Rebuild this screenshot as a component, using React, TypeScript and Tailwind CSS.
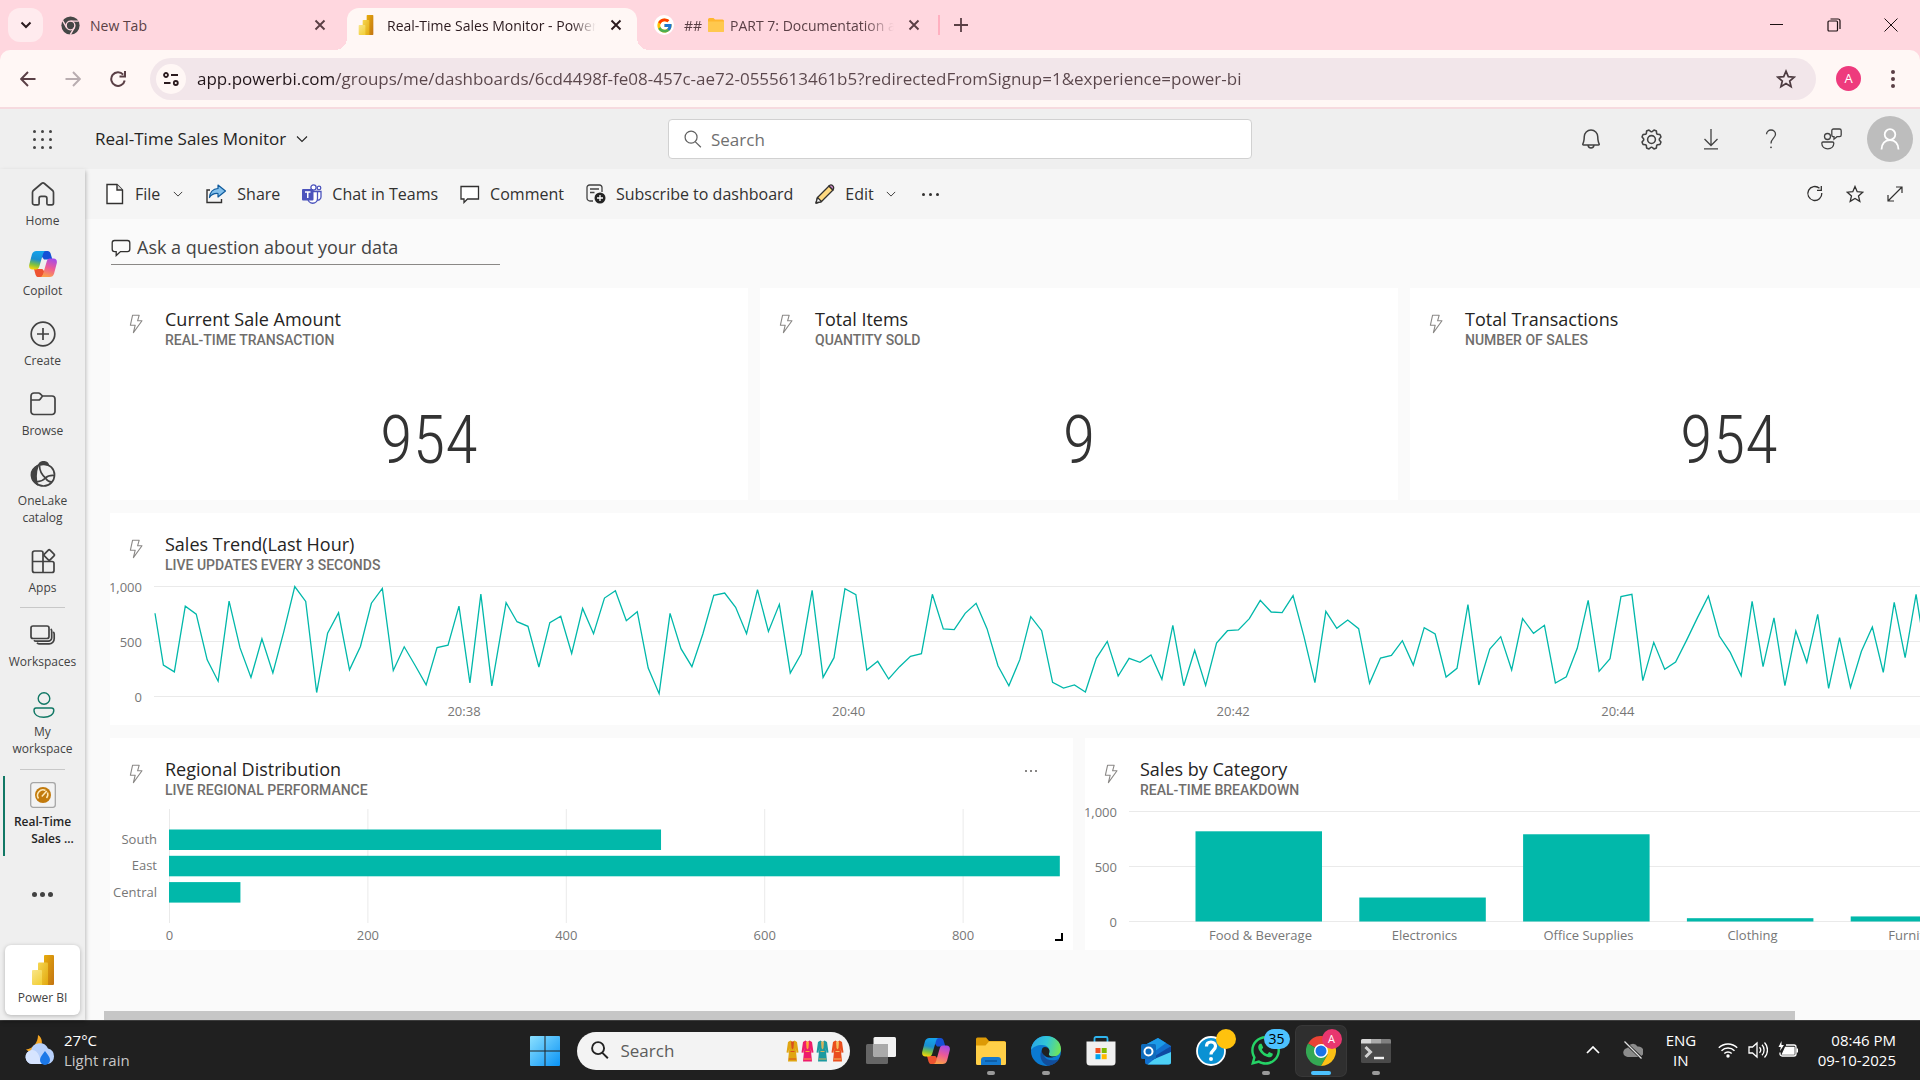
import React, { useState } from "react";
import { FcGoogle } from "react-icons/fc";
import { FaWhatsapp } from "react-icons/fa";
import { PiGear, PiBell } from "react-icons/pi";

type IconProps = { className?: string };

/* ---------- shared line icons ---------- */

const Chevron = ({ className = "" }: IconProps) => (
  <svg viewBox="0 0 12 12" className={className} fill="none" stroke="currentColor" strokeWidth="1.1">
    <path d="M1 3.5l5 5 5-5" />
  </svg>
);

const Cross = ({ className = "" }: IconProps) => (
  <svg viewBox="0 0 12 12" className={className} fill="none" stroke="currentColor" strokeWidth="1.9">
    <path d="M1.5 1.5l9 9M10.5 1.5l-9 9" />
  </svg>
);

const Magnifier = ({ className = "" }: IconProps) => (
  <svg viewBox="0 0 20 20" className={className} fill="none" stroke="currentColor">
    <circle cx="8.5" cy="7.5" r="6.3" />
    <path d="M12.8 12.2l6 6" />
  </svg>
);

const Bolt = () => (
  <svg viewBox="0 0 14 20" className="h-5 w-3.5 shrink-0" fill="none" stroke="#8a8886" strokeWidth="1.1">
    <path d="M3.6 1.2h6.6L8.6 6.8h4.4L4.4 18.6l1.8-7.4H1.4z" strokeLinejoin="round" />
  </svg>
);

const PowerBi = ({ className = "" }: IconProps) => (
  <svg viewBox="0 0 22 30" className={className}>
    <defs>
      <linearGradient id="pb1" x1="0" y1="0" x2="1" y2="1">
        <stop stopColor="#e8ad0c" />
        <stop offset="1" stopColor="#c27312" />
      </linearGradient>
      <linearGradient id="pb2" x1="0" y1="0" x2="1" y2="1">
        <stop stopColor="#f6d751" />
        <stop offset="1" stopColor="#e2a80e" />
      </linearGradient>
      <linearGradient id="pb3" x1="0" y1="0" x2="0.6" y2="1">
        <stop stopColor="#f9e589" />
        <stop offset="1" stopColor="#f3d13f" />
      </linearGradient>
    </defs>
    <rect x="12" width="10" height="30" rx="1" fill="url(#pb1)" />
    <path d="M6 8.5a1 1 0 011-1h8a1 1 0 011 1V30H6z" fill="url(#pb2)" />
    <path d="M0 16a1 1 0 011-1h8a1 1 0 011 1v14H1a1 1 0 01-1-1z" fill="url(#pb3)" />
  </svg>
);

const Copilot = ({ className = "" }: IconProps) => (
  <svg viewBox="0 0 28 26" className={className}>
    <defs>
      <linearGradient id="cp1" x1="0.5" y1="0" x2="0.3" y2="1">
        <stop stopColor="#15a3ec" />
        <stop offset="0.45" stopColor="#1b8fd0" />
        <stop offset="0.75" stopColor="#7dc142" />
        <stop offset="1" stopColor="#f7d50a" />
      </linearGradient>
      <linearGradient id="cp2" x1="0.7" y1="0" x2="0.4" y2="1">
        <stop stopColor="#a54be8" />
        <stop offset="0.5" stopColor="#ee5a96" />
        <stop offset="1" stopColor="#fba048" />
      </linearGradient>
    </defs>
    <path d="M15 0h3.6c1.6 0 2.5 1 3 2.6l1.8 5.8H15l-3-4z" fill="#1550d6" />
    <path d="M13 26H9.6c-1.8 0-2.6-1-3.1-2.6L5 18h8.4l2.4 3z" fill="#ee5330" />
    <path d="M7.4 0H17c-1.7 0-2.4 1.2-2.9 2.8l-3.8 12.6C9.7 17.4 8.9 18.4 7 18.4H3.4C.7 18.4-.4 16.2.3 13.4L2.9 3.6C3.5 1.3 5.2 0 7.4 0z" fill="url(#cp1)" />
    <path d="M20.6 26H11c1.7 0 2.5-1.2 3-2.8l3.7-12.6c.6-2 1.4-3 3.3-3h3.6c2.7 0 3.8 2.2 3.1 5l-2.6 9.8c-.6 2.3-2.3 3.6-4.5 3.6z" fill="url(#cp2)" />
  </svg>
);

const ChromeMono = () => (
  <svg viewBox="0 0 20 20" className="size-[19px]">
    <circle cx="10" cy="10" r="9.6" fill="#454746" />
    <g stroke="#ffd7df" strokeWidth="1.5" fill="none">
      <circle cx="10" cy="10" r="4.6" />
      <path d="M10 5.4h8.6M6 12.3L1.7 4.9M14 12.3l-4.3 7.4" />
    </g>
  </svg>
);

const ChromeColor = () => (
  <svg viewBox="0 0 30 30" className="size-[30px]">
    <path d="M15 15L2 7.5A15 15 0 0128 7.5z" fill="#ea4335" />
    <path d="M15 15L2 7.5A15 15 0 0015 30l6.5-11.2z" fill="#34a853" />
    <path d="M15 8h13.3A15 15 0 0115 30l6.5-11.2z" fill="#fbc116" />
    <circle cx="15" cy="15" r="7" fill="#fff" />
    <circle cx="15" cy="15" r="5.5" fill="#1a73e8" />
  </svg>
);

/* ---------- browser chrome ---------- */

function BrowserTabs() {
  return (
    <div className="flex h-[50px] items-stretch bg-[#ffd7df] pl-2 text-[#5a3f45]">
      <div className="flex items-center">
        <button aria-label="Search tabs" className="flex h-[34px] w-[35px] items-center justify-center rounded-xl bg-[#ffebee] text-[#2b1a1e]">
          <svg viewBox="0 0 12 8" className="h-2 w-3" fill="none" stroke="currentColor" strokeWidth="2">
            <path d="M1.5 1.5L6 6l4.5-4.5" />
          </svg>
        </button>
      </div>
      <div className="flex w-[304px] items-center pr-[21px] pl-[18px]">
        <ChromeMono />
        <span className="ml-[10px] flex-1 text-[14px]">New Tab</span>
        <button aria-label="Close New Tab"><Cross className="size-3" /></button>
      </div>
      <div className="relative mt-2 flex w-[290px] items-center rounded-t-[12px] bg-[#fff7f5] pr-[15px] pb-2 pl-2.5 text-[#2b1a1e]">
        <span className="absolute bottom-0 -left-3 size-3 bg-[radial-gradient(circle_at_0_0,#ffd7df_12px,#fff7f5_12px)]" />
        <span className="absolute -right-3 bottom-0 size-3 bg-[radial-gradient(circle_at_100%_0,#ffd7df_12px,#fff7f5_12px)]" />
        <PowerBi className="h-5 w-[18px]" />
        <span className="mr-3.5 ml-3 flex-1 overflow-hidden text-[14px] whitespace-nowrap [mask-image:linear-gradient(90deg,#000_88%,transparent)]">
          Real-Time Sales Monitor - Power BI
        </span>
        <button aria-label="Close Real-Time Sales Monitor"><Cross className="size-3" /></button>
      </div>
      <div className="flex w-[301px] items-center pr-[18px] pl-[17px]">
        <span className="flex size-5 items-center justify-center rounded-full bg-white"><FcGoogle size={17} /></span>
        <span className="ml-[10px] flex flex-1 items-center gap-[6px] overflow-hidden text-[14px] whitespace-nowrap [mask-image:linear-gradient(90deg,#000_86%,transparent)]">
          ##
          <svg viewBox="0 0 16 14" className="h-3.5 w-4 shrink-0">
            <path d="M0 1.5A1.5 1.5 0 011.5 0h4L7 1.5h7.500A1.5 1.5 0 0116 3v9.500a1.5 1.5 0 01-1.500 1.500h-13A1.5 1.5 0 010 12.500z" fill="#ffb62e" />
            <path d="M0 3.5h16v9a1.500 1.500 0 01-1.500 1.500h-13A1.500 1.500 0 010 12.500z" fill="#ffc84e" />
          </svg>
          PART 7: Documentation and
        </span>
        <button aria-label="Close Documentation" className="ml-3.5"><Cross className="size-3" /></button>
      </div>
      <div className="flex flex-1 items-center">
        <span className="h-5 w-0.5 bg-[#ffb0c0]" />
        <button aria-label="New tab" className="ml-3.5">
          <svg viewBox="0 0 14 14" className="size-3.5" stroke="currentColor" strokeWidth="1.8"><path d="M7 0v14M0 7h14" /></svg>
        </button>
      </div>
      <div className="flex items-center text-[#1c1012]">
        <button aria-label="Minimize" className="flex h-full w-[57px] items-center justify-center">
          <svg viewBox="0 0 13 13" className="size-[13px]" stroke="currentColor"><path d="M0 5.5h13" /></svg>
        </button>
        <button aria-label="Restore" className="flex h-full w-[57px] items-center justify-center">
          <svg viewBox="0 0 14 14" className="size-3.5" fill="none" stroke="currentColor" strokeWidth="1.2">
            <rect x="1" y="3" width="9.5" height="10" rx="1" /><path d="M3.5 1h7.500a2 2 0 012 2v8" />
          </svg>
        </button>
        <button aria-label="Close window" className="flex h-full w-[58px] items-center justify-center">
          <svg viewBox="0 0 14 14" className="size-3.5" stroke="currentColor" strokeWidth="1"><path d="M.5.5l13 13M13.500.5l-13 13" /></svg>
        </button>
      </div>
    </div>
  );
}

function AddressBar() {
  const [url, setUrl] = useState(
    "app.powerbi.com/groups/me/dashboards/6cd4498f-fe08-457c-ae72-0555613461b5?redirectedFromSignup=1&experience=power-bi",
  );
  return (
    <div className="bg-[#ffd7df]">
      <div className="flex h-[59px] items-center rounded-t-[10px] border-b-2 border-[#f6dadf] bg-[#fff7f5] pl-4 text-[#5a3f45]">
        <button aria-label="Back" className="flex w-[45px] pl-1">
          <svg viewBox="0 0 16 16" className="size-4" fill="none" stroke="currentColor" strokeWidth="1.9"><path d="M15.5 8H1.500M8 1L1.200 8 8 15" /></svg>
        </button>
        <button aria-label="Forward" className="flex w-[45px] pl-1 text-[#b9adb0]">
          <svg viewBox="0 0 16 16" className="size-4" fill="none" stroke="currentColor" strokeWidth="1.9"><path d="M.5 8h14M8 1l6.800 7L8 15" /></svg>
        </button>
        <button aria-label="Reload" className="flex w-11 pl-1">
          <svg viewBox="0 0 16 16" className="size-4" fill="none" stroke="currentColor" strokeWidth="2">
            <path d="M13.2 3.6A6.800 6.800 0 1014.700 9.500" /><path d="M15 0v5.500H9.500" />
          </svg>
        </button>
        <div className="flex h-[42px] flex-1 items-center rounded-full bg-[#f2e6ea] pr-5 pl-[6px]">
          <button aria-label="Site information" className="mr-[11px] flex size-[30px] items-center justify-center rounded-full bg-[#fff7f5] text-[#2b1a1e]">
            <svg viewBox="0 0 16 14" className="h-3.5 w-4" fill="none" stroke="currentColor" strokeWidth="1.8">
              <circle cx="3" cy="3" r="2" /><path d="M8 3h7M1 11h6.500" /><circle cx="12.800" cy="11" r="2" />
            </svg>
          </button>
          <input
            aria-label="Address"
            value={url}
            onChange={(e) => setUrl(e.target.value)}
            className="h-7 flex-1 bg-[linear-gradient(90deg,#22161a_138px,#5a464b_138px)] bg-clip-text text-[17px] text-transparent outline-none"
          />
          <button aria-label="Bookmark this tab">
            <svg viewBox="0 0 20 20" className="size-5" fill="none" stroke="#4d3b40" strokeWidth="1.7">
              <path d="M10 2.2l2.300 5.400 5.900.5-4.500 3.900 1.400 5.700L10 14.600l-5.100 3.100L6.300 12 1.800 8.100l5.900-.5z" />
            </svg>
          </button>
        </div>
        <button aria-label="Profile" className="mr-[26px] ml-5 flex size-[25px] items-center justify-center rounded-full bg-[#ee3a7d] text-[13px] text-white">A</button>
        <button aria-label="Browser menu" className="mr-[25px] ml-1 flex flex-col gap-[3px]">
          {[0, 1, 2].map((i) => <span key={i} className="size-1 rounded-full bg-current" />)}
        </button>
      </div>
    </div>
  );
}

/* ---------- Power BI header ---------- */

function AppHeader() {
  return (
    <header className="grid h-[60px] grid-cols-[1fr_584px_1fr] items-center bg-[#efefef] text-[#333]">
      <div className="flex items-center pl-[33px]">
        <button aria-label="App launcher" className="grid grid-cols-3 gap-[5px]">
          {Array.from({ length: 9 }, (_, i) => <span key={i} className="size-[3px] rounded-full bg-[#444]" />)}
        </button>
        <button className="ml-[43px] flex items-center gap-[10px] text-[17px] text-[#252423]">
          Real-Time Sales Monitor <Chevron className="size-3" />
        </button>
      </div>
      <div className="flex h-10 items-center gap-[9px] rounded border border-[#d1d1d1] bg-white px-3.5 text-[#616161]">
        <Magnifier className="size-[19px] shrink-0 stroke-[1.3px]" />
        <input aria-label="Search" placeholder="Search" className="w-full bg-transparent pt-px text-[17px] outline-none placeholder:text-[#707070]" />
      </div>
      <div className="flex items-center justify-end pr-[7px] text-[#424242]">
        <button aria-label="Notifications" className="flex w-[60px] justify-center"><PiBell size={24} /></button>
        <button aria-label="Settings" className="flex w-[60px] justify-center"><PiGear size={25} /></button>
        <button aria-label="Download" className="flex w-[60px] justify-center">
          <svg viewBox="0 0 22 22" className="size-[22px]" fill="none" stroke="currentColor" strokeWidth="1.3"><path d="M11 1v16M4.500 11L11 17.500l6.500-6.500M4 20.800h14" /></svg>
        </button>
        <button aria-label="Help" className="flex w-[60px] justify-center">
          <svg viewBox="0 0 22 22" className="size-[22px]" fill="none" stroke="currentColor" strokeWidth="1.3">
            <path d="M6.500 6.200A4.500 4.500 0 0111 2c2.600 0 4.500 1.800 4.500 4.200 0 3.800-4.500 4.300-4.500 9.300" /><circle cx="11" cy="19.300" r=".9" fill="currentColor" stroke="none" />
          </svg>
        </button>
        <button aria-label="Feedback" className="flex w-[60px] justify-center">
          <svg viewBox="0 0 22 22" className="size-[22px]" fill="none" stroke="currentColor" strokeWidth="1.3">
            <circle cx="7.500" cy="8.500" r="3" /><path d="M3 14h9.500c.8 0 1.300.6 1.300 1.300 0 3.200-2.600 5.500-6 5.500s-6-2.300-6-5.500c0-.7.5-1.300 1.200-1.300z" />
            <path d="M13.500 1h6a1.700 1.700 0 011.700 1.700V7a1.700 1.700 0 01-1.700 1.700H17l-3 2.500V8.700h-.5A1.700 1.700 0 0111.800 7V2.700A1.700 1.700 0 0113.500 1z" />
          </svg>
        </button>
        <button aria-label="Account" className="ml-[6px] flex size-[46px] items-center justify-center rounded-full bg-[#bdbdbd]">
          <svg viewBox="0 0 22 22" className="size-[22px]" fill="none" stroke="#fff" strokeWidth="1.8"><circle cx="11" cy="6.500" r="5.300" /><path d="M2.500 21.500c0-5.500 3.500-9.500 8.500-9.500s8.500 4 8.500 9.500" /></svg>
        </button>
      </div>
    </header>
  );
}

/* ---------- left navigation ---------- */

const navIcon = "h-[26px] w-[26px]";
const lineProps = { fill: "none", stroke: "#424242", strokeWidth: 1.7 } as const;

function NavItem({ icon, children, bold }: { icon: React.ReactNode; children: React.ReactNode; bold?: boolean }) {
  return (
    <a href="#" className={"flex flex-col items-center gap-[5px] pt-[6px] text-center text-[12px] leading-[17px] " + (bold ? "font-semibold text-[#242424]" : "text-[#424242]")}>
      {icon}
      <span>{children}</span>
    </a>
  );
}

function SideNav() {
  return (
    <nav className="relative z-10 flex w-[85px] shrink-0 flex-col bg-[#efefef] pt-[6px] shadow-[1px_2px_4px_rgba(0,0,0,0.25)]">
      <div className="flex flex-col gap-4">
        <NavItem icon={<svg viewBox="0 0 26 26" className={navIcon} {...lineProps}><path d="M2.500 11.500c0-.8.3-1.500.9-2l8.200-7a2.200 2.200 0 012.800 0l8.200 7c.6.500.9 1.200.9 2V22c0 1-.7 1.800-1.700 1.800h-3.500c-.8 0-1.400-.6-1.400-1.400v-5a2 2 0 00-2-2h-3.800a2 2 0 00-2 2v5c0 .8-.6 1.400-1.400 1.400H4.200c-1 0-1.700-.8-1.700-1.800z" /></svg>}>Home</NavItem>
        <NavItem icon={<Copilot className="h-[26px] w-7" />}>Copilot</NavItem>
        <NavItem icon={<svg viewBox="0 0 26 26" className={navIcon} {...lineProps}><circle cx="13" cy="13" r="11.800" /><path d="M13 7v12M7 13h12" /></svg>}>Create</NavItem>
        <NavItem icon={<svg viewBox="0 0 26 26" className={navIcon} {...lineProps}><path d="M1 9V5a3 3 0 013-3h4.500c.6 0 1.100.2 1.500.6L12.500 5H22a3 3 0 013 3v12.500a3 3 0 01-3 3H4a3 3 0 01-3-3V9h7.500c.6 0 1.100-.2 1.500-.6L12.500 5" /></svg>}>Browse</NavItem>
        <NavItem icon={<svg viewBox="0 0 26 26" className={navIcon} fill="none" stroke="#424242" strokeWidth="1.7"><path d="M9 4C9.500 1.800 11 .8 13.500.8c2.600 0 4.500 1.500 4.800 3.400-3-1.200-6-1.200-9.300-.2z" fill="#424242" /><path d="M8 4.500C3 7 1 10.500 1.500 15c.4 4 2.500 6.500 5.500 8.200C5.500 17 5.500 11 8 4.500z" fill="#424242" /><circle cx="13.500" cy="14" r="11" /><path d="M9.500 4.500c0 5 1.500 8.500 6 12.500M6.500 20.500c4 .5 6.500-1 9-3.500 2-2 4.500-3 9-2.500M15.500 17c1.500 2.500 4 4 6.500 4" /></svg>}>OneLake<br />catalog</NavItem>
        <NavItem icon={<svg viewBox="0 0 26 26" className={navIcon} {...lineProps}><path d="M13 13.500V5a2 2 0 00-2-2H4.500a2 2 0 00-2 2v17.500a2 2 0 002 2H22a2 2 0 002-2v-7a2 2 0 00-2-2H2.500M13 13.500v11" /><rect x="15.200" y="3" width="8" height="8" rx="1.200" transform="rotate(45 19.200 7)" /></svg>}>Apps</NavItem>
      </div>
      <hr className="mx-5 mt-[11px] mb-2 border-[#c8c8c8]" />
      <div className="flex flex-col gap-4">
        <NavItem icon={<svg viewBox="0 0 26 26" className={navIcon} {...lineProps}><rect x="1" y="4" width="18" height="12.500" rx="2" /><path d="M4 18.200c.5.700 1.200 1 2 1h12.200a3.500 3.500 0 003.500-3.500V9c0-.8-.3-1.500-1-2M7 20.800c.5.700 1.200 1 2 1h10.200a5 5 0 005-5V12c0-.8-.3-1.500-1-2" /></svg>}>Workspaces</NavItem>
        <NavItem icon={<svg viewBox="0 0 26 26" className={navIcon} fill="none" stroke="#117865" strokeWidth="1.4"><circle cx="14" cy="6.500" r="5.800" /><path d="M6 16h15.500c1.400 0 2.300 1 2.300 2.200 0 4.400-4.300 7-10 7S4 22.600 4 18.200C4 17 4.700 16 6 16z" /></svg>}>My<br />workspace</NavItem>
      </div>
      <hr className="mx-5 mt-3 mb-[6px] border-[#c8c8c8]" />
      <div className="ml-[3px] h-20 border-l-2 border-[#117865] pr-[5px]">
        <NavItem bold icon={
          <svg viewBox="0 0 26 26" className={navIcon}>
            <rect x=".7" y=".7" width="24.600" height="24.600" rx="2.500" fill="#f3f3f3" stroke="#a6a6a6" strokeWidth="1.3" />
            <circle cx="13" cy="13" r="8" fill="#c27a0c" />
            <path d="M8.500 16.500a5.500 5.500 0 017-8M17.500 10.500a5.500 5.500 0 01-1 5.500M11.800 14.500l5-5.500" fill="none" stroke="#ffe9b8" strokeWidth="1.5" />
          </svg>}>Real-Time<br /><span className="ml-5">Sales ...</span></NavItem>
      </div>
      <button aria-label="More" className="mt-9 flex justify-center gap-[3px]">
        {[0, 1, 2].map((i) => <span key={i} className="size-[5px] rounded-full bg-[#424242]" />)}
      </button>
      <a href="#" className="mx-[5px] mt-auto mb-[5px] flex h-[70px] flex-col items-center gap-1 rounded-md bg-white pt-[10px] text-[12px] leading-[17px] text-[#424242] shadow-[0_1px_4px_rgba(0,0,0,0.25)]">
        <PowerBi className="h-[30px] w-[22px]" />
        Power BI
      </a>
    </nav>
  );
}

/* ---------- dashboard toolbar ---------- */

function Toolbar() {
  const item = "flex items-center gap-[10px] whitespace-nowrap";
  return (
    <div className="flex h-[50px] items-center bg-[#f5f5f5] pr-4 pl-[21px] text-[16px] text-[#323130]">
      <div className="flex flex-1 items-center gap-[22px]">
        <button className={item}>
          <svg viewBox="0 0 18 22" className="mr-px h-[22px] w-[18px]" stroke="#323130" strokeWidth="1.4"><path d="M1 1.500h10L16.500 7v13.500H1z" fill="#fff" /><path d="M11 1.500V7h5.500" fill="#ddd" /></svg>
          File <Chevron className="ml-[3px] size-2.5" />
        </button>
        <button className={item}>
          <svg viewBox="0 0 22 22" className="size-[22px]"><path d="M5 7H2v12.500h14.500V16" fill="none" stroke="#323130" strokeWidth="1.4" /><path d="M13 2l7.500 6L13 14v-3.500c-4-.3-6.500.8-8.500 4C5 9 8 5.800 13 5.500z" fill="#83c0ec" stroke="#0f5a9c" strokeWidth="1.2" strokeLinejoin="round" /></svg>
          Share
        </button>
        <button className={item}>
          <svg viewBox="0 0 20 20" className="size-5">
            <g fill="#fff" stroke="#4b53bc" strokeWidth="1.3"><circle cx="17" cy="4" r="1.800" /><circle cx="11.500" cy="3.500" r="2.600" /><path d="M14.500 7.500H19v5.500a3 3 0 01-4.500 2.600z" /><path d="M6 7.500h9.500v7a4.700 4.700 0 01-9.500 0z" /></g>
            <rect y="5" width="11.500" height="11.500" rx="1" fill="#4b53bc" /><path d="M3 8h5.500M5.750 8v6" stroke="#fff" strokeWidth="1.5" />
          </svg>
          Chat in Teams
        </button>
        <button className={item}>
          <svg viewBox="0 0 20 20" className="size-5" fill="#fff" stroke="#323130" strokeWidth="1.3"><path d="M1 2.500h17.500v12.500h-11L4 18.500V15H1z" /></svg>
          Comment
        </button>
        <button className={item}>
          <svg viewBox="0 0 20 20" className="size-5" fill="none" stroke="#424242" strokeWidth="1.3"><path d="M7 17H4a3 3 0 01-3-3V3.500A2.500 2.500 0 013.500 1h10A2.500 2.500 0 0116 3.500V8M4 5h9M4 8.500h4.500" /><circle cx="14" cy="14" r="5.500" fill="#242424" stroke="none" /><path d="M14 11v6M11 14h6" stroke="#fff" /></svg>
          Subscribe to dashboard
        </button>
        <button className={item}>
          <svg viewBox="0 0 20 20" className="size-5" stroke="#323130" strokeWidth="1.3" strokeLinejoin="round"><path d="M1 19l1.500-5.500L14 2l4 4L6.500 17.500z" fill="#ffd97f" /><path d="M14 2c1-1.300 2.500-1.500 3.700-.3s1.300 2.600.3 4.300z" fill="#d58bd0" /><path d="M1 19l1.500-5.500 4 4z" fill="#fff" /></svg>
          Edit <Chevron className="ml-0.5 size-2.5" />
        </button>
        <button aria-label="More options" className="ml-1 flex gap-1">
          {[0, 1, 2].map((i) => <span key={i} className="size-[3px] rounded-full bg-[#323130]" />)}
        </button>
      </div>
      <div className="flex items-center gap-[22px]">
        <button aria-label="Refresh"><svg viewBox="0 0 18 18" className="size-[18px]" fill="none" stroke="currentColor" strokeWidth="1.3"><path d="M13.500 3.300A7 7 0 1015.800 8" /><path d="M15.300 1v4.300H11" /></svg></button>
        <button aria-label="Favorite"><svg viewBox="0 0 18 18" className="size-[18px]" fill="none" stroke="currentColor" strokeWidth="1.3"><path d="M9 1.500l2.200 5.200 5.500.5-4.200 3.700 1.300 5.500L9 13.500l-4.800 2.900 1.300-5.500L1.300 7.200l5.500-.5z" /></svg></button>
        <button aria-label="Full screen"><svg viewBox="0 0 18 18" className="size-[18px]" fill="none" stroke="currentColor" strokeWidth="1.2"><path d="M2.500 15.500l13-13M10 2h6v6M2 10v6h6" /></svg></button>
      </div>
    </div>
  );
}

/* ---------- tiles ---------- */

function Tile({ title, subtitle, className, children, menu }: { title: string; subtitle: string; className: string; children: React.ReactNode; menu?: boolean }) {
  return (
    <section className={"relative flex h-[212px] flex-col bg-white " + className}>
      <div className="flex pt-[21px] pl-[19px]">
        <span className="mt-[5px]"><Bolt /></span>
        <div className="ml-[22px]">
          <h2 className="text-[18px] leading-5 text-[#252423]">{title}</h2>
          <p className="mt-0.5 font-[Roboto] text-[14px] leading-[18px] font-medium text-[#706e6c]">{subtitle}</p>
        </div>
        {menu && (
          <button aria-label="Tile options" className="mt-[11px] mr-9 ml-auto flex h-1 gap-[3px]">
            {[0, 1, 2].map((i) => <span key={i} className="size-[2px] rounded-full bg-[#605e5c]" />)}
          </button>
        )}
      </div>
      {children}
      {menu && <span className="absolute right-[10px] bottom-[9px] size-2 border-r-2 border-b-2 border-black" />}
    </section>
  );
}

const CardValue = ({ children }: { children: string }) => (
  <p className="mt-[51px] text-center font-['Roboto_Condensed','Liberation_Sans_Narrow',sans-serif] text-[67px] leading-[80px] font-light text-[#333]">{children}</p>
);

/* Readings arrive every few seconds; one reading was delayed, so there are two runs. */
const firstRun = [
  285, 224, 821, 748, 333, 139, 867, 442, 173, 524, 215, 590, 1000, 864, 36, 576, 761, 242, 455, 848, 982, 236, 452, 282,
  106, 445, 467, 821, 124, 930, 97,
];
const secondRun = [
  853, 680, 638, 268, 671, 729, 392, 801, 571, 895, 962, 689, 771, 259, 26, 756, 435, 271, 568, 920, 941, 811, 571, 971,
  592, 838, 214, 389, 965, 174, 353, 980, 926, 241, 320, 159, 271, 365, 389, 929, 614, 608, 756, 847, 617, 280, 98, 335,
  726, 598, 129, 77, 105, 41, 347, 501, 186, 347, 311, 377, 156, 647, 98, 420, 101, 486, 598, 605, 708, 874, 768, 762,
  917, 544, 126, 774, 620, 695, 617, 120, 350, 374, 507, 286, 626, 568, 177, 256, 835, 105, 432, 544, 241, 708, 574, 647,
  123, 180, 438, 874, 229, 344, 908, 929, 144, 492, 247, 314, 510, 717, 914, 550, 401, 189, 865, 271, 714, 98, 595, 311,
  747, 74, 535, 83, 411, 632, 220, 856, 353, 929, 300,
];
const trendY = (v: number) => 121.5 - v * 0.11;
const trend = [
  `45,${trendY(757)}`,
  ...firstRun.map((v, i) => `${53.4 + i * 10.947},${trendY(v)}`),
  ...secondRun.map((v, i) => `${396.1 + i * 10.93},${trendY(v)}`),
].join(" ");

const axisText = "fill-[#777777] text-[13px]";

function TrendChart() {
  return (
    <svg className="mt-auto h-[150px] w-full shrink-0" aria-label="Sales trend line chart">
      {[1000, 500, 0].map((v) => (
        <g key={v}>
          <line x1="44" x2="100%" y1={trendY(v)} y2={trendY(v)} stroke="#eaeaea" />
          <text x="32" y={trendY(v) + 5} textAnchor="end" className={axisText}>{v.toLocaleString("en-US")}</text>
        </g>
      ))}
      {["20:38", "20:40", "20:42", "20:44", "20:46"].map((t, i) => (
        <text key={t} x={354 + i * 384.6} y="141" textAnchor="middle" className={axisText}>{t}</text>
      ))}
      <polyline points={trend} fill="none" stroke="#01b8aa" strokeWidth="1.3" />
    </svg>
  );
}

function RegionChart() {
  const rows = [["South", 496], ["East", 898], ["Central", 72]] as const;
  return (
    <svg className="mt-auto h-[145px] w-full shrink-0" aria-label="Regional distribution bar chart">
      {[0, 200, 400, 600, 800].map((v) => (
        <g key={v}>
          <line x1={59.5 + v * 0.992} x2={59.5 + v * 0.992} y1="4" y2="118" stroke="#eaeaea" />
          <text x={59.5 + v * 0.992} y="135" textAnchor="middle" className={axisText}>{v}</text>
        </g>
      ))}
      {rows.map(([name, v], i) => (
        <g key={name}>
          <rect x="59" y={24.5 + i * 26.3} width={v * 0.992} height="20.5" fill="#01b8aa" />
          <text x="47" y={39 + i * 26.3} textAnchor="end" className={axisText}>{name}</text>
        </g>
      ))}
    </svg>
  );
}

function CategoryChart() {
  const bars = [["Food & Beverage", 820], ["Electronics", 218], ["Office Supplies", 793], ["Clothing", 30], ["Furniture", 46]] as const;
  const y = (v: number) => 116.5 - v * 0.11;
  return (
    <svg className="mt-auto h-[145px] w-full shrink-0" aria-label="Sales by category column chart">
      {[1000, 500, 0].map((v) => (
        <g key={v}>
          <line x1="44" x2="100%" y1={y(v)} y2={y(v)} stroke="#eaeaea" />
          <text x="32" y={y(v) + 5} textAnchor="end" className={axisText}>{v.toLocaleString("en-US")}</text>
        </g>
      ))}
      {bars.map(([name, v], i) => (
        <g key={name}>
          <rect x={110.5 + i * 163.8} y={y(v)} width="126.5" height={v * 0.11} fill="#01b8aa" />
          <text x={175.5 + i * 164} y="135" textAnchor="middle" className={axisText}>{name}</text>
        </g>
      ))}
    </svg>
  );
}

function Dashboard() {
  return (
    <main className="flex min-w-0 flex-1 flex-col bg-[#fafafa]">
      <Toolbar />
      <div className="flex flex-1 flex-col overflow-hidden pl-[25px]">
        <div className="mt-[10px] ml-px flex h-9 w-[389px] items-center gap-[6px] border-b border-[#8a8886]">
          <svg viewBox="0 0 20 18" className="mt-0.5 h-[18px] w-5 shrink-0" fill="none" stroke="#323130" strokeWidth="1.3"><path d="M3.500 1.500h13A2.300 2.300 0 0118.800 3.800v6.500a2.300 2.300 0 01-2.300 2.300H9.500l-4.300 4v-4H3.500a2.300 2.300 0 01-2.300-2.300V3.800a2.300 2.300 0 012.300-2.300z" /></svg>
          <input aria-label="Ask a question about your data" placeholder="Ask a question about your data" className="w-full bg-transparent pt-px text-[18px] outline-none placeholder:text-[#444]" />
        </div>
        <div className="mt-[23px] grid w-[1938px] grid-cols-6 gap-x-3 gap-y-[13px]">
          <Tile className="col-span-2" title="Current Sale Amount" subtitle="REAL-TIME TRANSACTION"><CardValue>954</CardValue></Tile>
          <Tile className="col-span-2" title="Total Items" subtitle="QUANTITY SOLD"><CardValue>9</CardValue></Tile>
          <Tile className="col-span-2" title="Total Transactions" subtitle="NUMBER OF SALES"><CardValue>954</CardValue></Tile>
          <Tile className="col-span-6" title="Sales Trend(Last Hour)" subtitle="LIVE UPDATES EVERY 3 SECONDS"><TrendChart /></Tile>
          <Tile className="col-span-3" title="Regional Distribution" subtitle="LIVE REGIONAL PERFORMANCE" menu><RegionChart /></Tile>
          <Tile className="col-span-3" title="Sales by Category" subtitle="REAL-TIME BREAKDOWN"><CategoryChart /></Tile>
        </div>
        <div className="mt-auto mr-[125px] -ml-[6px] h-[9px] bg-[#c6c6c6]" />
      </div>
    </main>
  );
}

/* ---------- Windows taskbar ---------- */

const Kurta = ({ color, accent }: { color: string; accent: string }) => (
  <svg viewBox="0 0 15 22" className="h-[22px] w-[15px]">
    <path d="M5.500.5L7.500 2l2-1.500L12 2l1.500 10.500-2 .3-.8-4.800 1.300 13.500H3L4.300 8l-.8 4.800-2-.3L3 2z" fill={color} />
    <path d="M6 1.500h3l-.5 6.500-1 1.500L6.500 8z" fill={accent} />
    <path d="M5.500 11.500h4M3.800 19h7.400" stroke={accent} />
  </svg>
);

function TaskButton({ label, children, state }: { label: string; children: React.ReactNode; state?: "open" | "active" }) {
  return (
    <button aria-label={label} className={"relative flex size-[50px] items-center justify-center rounded-md " + (state === "active" ? "bg-[#2f2f2f] ring-1 ring-[#383838]" : "")}>
      {children}
      {state === "open" && <span className="absolute bottom-px h-1 w-2 rounded-full bg-[#9a9a9a]" />}
      {state === "active" && <span className="absolute bottom-px h-1 w-5 rounded-full bg-[#4cc2ff]" />}
    </button>
  );
}

function Taskbar() {
  const big = "size-[30px]";
  return (
    <footer className="grid h-[60px] grid-cols-[1fr_auto_1fr] items-center border-t border-[#3c3c3c] bg-[#202020] text-[15px] leading-5 text-white">
      <div className="flex items-center gap-2 pb-0.5 pl-6">
        <svg viewBox="0 0 32 32" className="size-8">
          <path d="M14 1c5 3 5.500 11 0 15-4 3-9 2.500-12-.5C9 14.500 14 9 14 1z" fill="#f5a623" />
          <path d="M8 30a7 7 0 01-1-13.800A9 9 0 0124 14.500 8 8 0 0124 30z" fill="#b7d0fb" />
          <path d="M8 30a7 7 0 01-1-13.800C11 15 16 19 17 30z" fill="#d6e4ff" />
          <path d="M21 17c3 4 5 6.500 5 9a5 5 0 01-10 0c0-2.500 2-5 5-9z" fill="#1c78e8" />
        </svg>
        <div><p>27°C</p><p className="text-[#c8c8c8]">Light rain</p></div>
      </div>
      <div className="flex items-center">
        <TaskButton label="Start">
          <svg viewBox="0 0 30 30" className={big}>
            <defs><linearGradient id="win" x1="0" y1="0" x2="1" y2="1"><stop stopColor="#8be0ff" /><stop offset="1" stopColor="#0a93f5" /></linearGradient></defs>
            <path d="M1 0h13.500v14.500H0V1a1 1 0 011-1zM15.500 0H29a1 1 0 011 1v13.500H15.500zM0 15.500h14.500V30H1a1 1 0 01-1-1zM15.500 15.500H30V29a1 1 0 01-1 1H15.500z" fill="url(#win)" />
          </svg>
        </TaskButton>
        <div className="mr-[6px] ml-[7px] flex h-[38px] w-[273px] items-center rounded-full bg-[#f3f3f3] pr-[5px] pl-[13px] text-[#222]">
          <Magnifier className="size-[19px] shrink-0 stroke-2" />
          <input aria-label="Search Windows" placeholder="Search" className="ml-3 w-0 flex-1 bg-transparent text-[17px] outline-none placeholder:text-[#5c5c5c]" />
          <span className="flex">
            <Kurta color="#e0a512" accent="#d94f1e" /><Kurta color="#ee1c6b" accent="#ffa63a" /><Kurta color="#1c9aa0" accent="#d6b25e" /><Kurta color="#ea4e1d" accent="#f7bd60" />
          </span>
        </div>
        <div className="flex gap-[5px]">
          <TaskButton label="Task view">
            <svg viewBox="0 0 30 30" className={big}><rect y="8" width="22" height="20" rx="1.500" fill="#666" /><rect x="7.500" y="1" width="22.500" height="20" rx="1.500" fill="#f2f2f2" /><path d="M7.500 8H22v13H9a1.500 1.500 0 01-1.500-1.500z" fill="#aaa" /></svg>
          </TaskButton>
          <TaskButton label="Copilot"><Copilot className="h-[26px] w-7" /></TaskButton>
          <TaskButton label="File Explorer" state="open">
            <svg viewBox="0 0 30 28" className="h-7 w-[30px]"><path d="M0 2a1.500 1.500 0 011.500-1.500h8.500l3 3.500H28a2 2 0 012 2v6H0z" fill="#dd9a06" /><path d="M0 8.500h9.500L13 4.500h15.500A1.500 1.500 0 0130 6v20.500a1.500 1.500 0 01-1.500 1.500h-27A1.500 1.500 0 010 26.500z" fill="#ffcf48" /><path d="M5 28v-5a3 3 0 013-3h14a3 3 0 013 3v5z" fill="#1479cf" /><path d="M9 24h12" stroke="#0b4f91" strokeWidth="1.3" /></svg>
          </TaskButton>
          <TaskButton label="Microsoft Edge" state="open">
            <svg viewBox="0 0 30 30" className={big}>
              <defs><linearGradient id="edge" x1="0" y1="0.3" x2="1" y2="0.5"><stop stopColor="#2aa6e6" /><stop offset="0.5" stopColor="#31c6d8" /><stop offset="1" stopColor="#70e559" /></linearGradient></defs>
              <circle cx="15" cy="15" r="15" fill="#0b7ad1" />
              <path d="M11 14c-3 4-2 13 6 15.700 5-.4 8.800-3 11.500-7-7 3.300-13.500 1.300-15.500-3z" fill="#124e9b" />
              <path d="M0 14C.5 6 7 0 15 0c9 0 15 6 15 13 0 4.500-3.500 7.500-7.500 7.500-4 0-5-1.500-4.500-2.800 1.700-4-1-8.700-7-8.700-5 0-9 2-11 5z" fill="url(#edge)" />
              <path d="M18 17.500c1.500-3.500-.5-6.500-4-6.500s-5 5 0 9c3 2.200 8 2.200 12-.5-3 1.500-9 1.500-8-2z" fill="#202020" />
            </svg>
          </TaskButton>
          <TaskButton label="Microsoft Store">
            <svg viewBox="0 0 30 30" className={big}><path d="M8.500 7V2.500a1.500 1.500 0 011.500-1.500h10a1.500 1.500 0 011.500 1.500V7" fill="none" stroke="#2fb4ee" strokeWidth="1.8" /><path d="M.5 5.500h29V26a3.500 3.500 0 01-3.500 3.500H4A3.500 3.500 0 01.5 26z" fill="#f0f0f0" /><path d="M9.500 12h5v5h-5z" fill="#f25022" /><path d="M15.700 12h5v5h-5z" fill="#7fba00" /><path d="M9.500 18.200h5v5h-5z" fill="#00a4ef" /><path d="M15.700 18.200h5v5h-5z" fill="#ffb900" /></svg>
          </TaskButton>
          <TaskButton label="Outlook">
            <svg viewBox="0 0 30 28" className="h-7 w-[30px]"><path d="M4 8L17 1l13 8v16a2.500 2.500 0 01-2.500 2.500h-21A2.500 2.500 0 014 25z" fill="#1170cf" /><path d="M4 8l13-7 8 5L6 20z" fill="#1c9be8" /><path d="M30 9v16a2.500 2.500 0 01-2.500 2.500h-21z" fill="#4cd0f5" /><path d="M30 9L14 19l-3 4 19-8z" fill="#0f4aa3" /><rect y="7" width="15" height="15" rx="1.500" fill="#0f6cbd" /><circle cx="7.500" cy="14.500" r="4" fill="none" stroke="#fff" strokeWidth="2" /></svg>
          </TaskButton>
          <TaskButton label="Get Help">
            <svg viewBox="0 0 30 30" className={big}><circle cx="15" cy="15" r="14" fill="#0a91d3" stroke="#fff" strokeWidth="1.8" /><path d="M10.500 10.500c0-3 2-4.500 4.500-4.500s4.500 1.700 4.500 4.300c0 4-4.500 4-4.500 8.200" fill="none" stroke="#fff" strokeWidth="3.2" /><circle cx="15" cy="23" r="2" fill="#fff" /></svg>
            <span className="absolute top-[3px] right-0 size-5 rounded-full bg-[#ffc20e]" />
          </TaskButton>
          <TaskButton label="WhatsApp" state="open">
            <FaWhatsapp size={33} color="#25d366" />
            <span className="absolute top-[3px] left-[23px] flex h-5 w-[26px] items-center justify-center rounded-full bg-[#4cc2ff] text-[14px] text-black">35</span>
          </TaskButton>
          <TaskButton label="Google Chrome" state="active">
            <ChromeColor />
            <span className="absolute top-[3px] left-[26px] flex size-5 items-center justify-center rounded-full bg-[#e8366f] text-[11px] text-white">A</span>
          </TaskButton>
          <TaskButton label="Terminal" state="open">
            <svg viewBox="0 0 30 24" className="h-6 w-[30px]"><rect width="30" height="24" rx="1.500" fill="#4a4a4a" /><path d="M0 4.500V1.500A1.500 1.500 0 011.500 0H10v4.500z" fill="#d8d8d8" /><path d="M10 0h10v4.500H10z" fill="#aaa" /><path d="M20 0h8.500A1.500 1.500 0 0130 1.500v3H20z" fill="#808080" /><path d="M4.500 8l5 5-5 5" fill="none" stroke="#d0d0d0" strokeWidth="3" /><path d="M13 19h10" stroke="#f0f0f0" strokeWidth="2.4" /></svg>
          </TaskButton>
        </div>
      </div>
      <div className="flex items-center justify-end pr-6 pb-0.5">
        <button aria-label="Show hidden icons"><svg viewBox="0 0 14 8" className="h-2 w-3.5" fill="none" stroke="currentColor" strokeWidth="1.7"><path d="M1 7l6-6 6 6" /></svg></button>
        <svg viewBox="0 0 20 18" className="ml-[23px] h-[18px] w-5"><path d="M5 16a4.500 4.500 0 01-.5-9A5.500 5.500 0 0114.500 5.500 5 5 0 0116 16z" fill="#8c8c8c" /><path d="M1 .5L19 17.500" stroke="#202020" strokeWidth="3" /><path d="M1.500.5L18.500 17.500" stroke="#e0e0e0" strokeWidth="1.3" /></svg>
        <div className="ml-[23px] w-[30px] text-center">ENG<br />IN</div>
        <svg viewBox="0 0 20 16" className="ml-[22px] h-4 w-5" fill="none" stroke="currentColor" strokeWidth="1.5"><path d="M.8 5.800a13 13 0 0118.400 0M3.500 8.700a9.200 9.200 0 0113 0M6.300 11.500a5.300 5.300 0 017.400 0" /><circle cx="10" cy="14" r="1.700" fill="currentColor" stroke="none" /></svg>
        <svg viewBox="0 0 20 18" className="ml-[10px] h-[18px] w-5" fill="none" stroke="currentColor" strokeWidth="1.3"><path d="M1 6h3.500L9 2v14l-4.500-4H1zM11.500 6.300a4 4 0 010 5.400M14 3.800a7.500 7.500 0 010 10.400M16.500 1.500a11 11 0 010 15" /></svg>
        <svg viewBox="0 0 20 18" className="ml-[10px] h-[18px] w-5" fill="none" stroke="currentColor" strokeWidth="1.3"><path d="M8 4h8a2 2 0 012 2v7a2 2 0 01-2 2H4a2 2 0 01-2-2v-1.500" /><path d="M7.500 6.500H16v6.500H4.500z" fill="currentColor" /><path d="M3.500 0L.5 6h2.300L2 10l4-6H3.500z" fill="currentColor" stroke="none" /><path d="M19.300 7.500v4" strokeWidth="1.5" /></svg>
        <div className="ml-5 text-right">08:46 PM<br />09-10-2025</div>
      </div>
    </footer>
  );
}

export default function App() {
  return (
    <div className="flex h-screen flex-col overflow-hidden font-['Open_Sans','Noto_Sans',sans-serif]">
      <BrowserTabs />
      <AddressBar />
      <AppHeader />
      <div className="flex min-h-0 flex-1">
        <SideNav />
        <Dashboard />
      </div>
      <Taskbar />
    </div>
  );
}
